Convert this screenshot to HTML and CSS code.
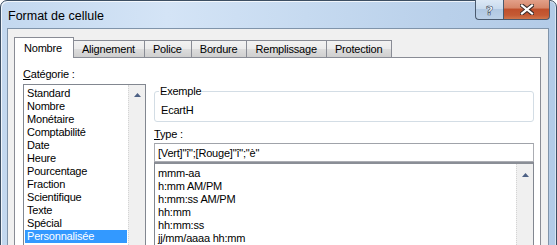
FILE: index.html
```html
<!DOCTYPE html>
<html lang="fr">
<head>
<meta charset="utf-8">
<title>Format de cellule</title>
<link rel="stylesheet" href="styles.css">
</head>
<body>
<div class="window">
  <div class="titlebar">
    <span class="title">Format de cellule</span>
    <div class="caption">
      <div class="cap-btn help">?</div>
      <div class="cap-btn close">
        <svg width="14" height="11" viewBox="0 0 14 11"><path d="M2 1.5 L12 9.5 M12 1.5 L2 9.5" stroke="#3a2a28" stroke-width="4.2" stroke-linecap="square"/><path d="M2 1.5 L12 9.5 M12 1.5 L2 9.5" stroke="#fff" stroke-width="2.2" stroke-linecap="square"/></svg>
      </div>
    </div>
  </div>
  <div class="client">
    <div class="tabs">
      <div class="tab active">Nombre</div>
      <div class="tab">Alignement</div>
      <div class="tab">Police</div>
      <div class="tab">Bordure</div>
      <div class="tab">Remplissage</div>
      <div class="tab">Protection</div>
    </div>
    <div class="panel">
      <div class="col-left">
        <div class="label"><u>C</u>atégorie :</div>
        <div class="listbox cat-list">
          <ul class="items">
            <li>Standard</li>
            <li>Nombre</li>
            <li>Monétaire</li>
            <li>Comptabilité</li>
            <li>Date</li>
            <li>Heure</li>
            <li>Pourcentage</li>
            <li>Fraction</li>
            <li>Scientifique</li>
            <li>Texte</li>
            <li>Spécial</li>
            <li class="selected">Personnalisée</li>
          </ul>
          <div class="scrollbar"><svg class="arrow" width="7" height="4" viewBox="0 0 7 4"><path d="M0 4 L3.5 0 L7 4 Z" fill="#4d6185"/></svg></div>
        </div>
      </div>
      <div class="col-right">
        <fieldset class="group">
          <legend>Exemple</legend>
          <div class="sample">EcartH</div>
        </fieldset>
        <div class="label type-label"><u>T</u>ype :</div>
        <div class="input">[Vert]"î";[Rouge]"î";"è"</div>
        <div class="listbox type-list">
          <ul class="items">
            <li>mmm-aa</li>
            <li>h:mm AM/PM</li>
            <li>h:mm:ss AM/PM</li>
            <li>hh:mm</li>
            <li>hh:mm:ss</li>
            <li>jj/mm/aaaa hh:mm</li>
          </ul>
          <div class="scrollbar"><svg class="arrow" width="7" height="4" viewBox="0 0 7 4"><path d="M0 4 L3.5 0 L7 4 Z" fill="#4d6185"/></svg></div>
        </div>
      </div>
    </div>
  </div>
</div>
</body>
</html>
```

FILE: styles.css
```css
* { box-sizing: border-box; }
html, body { margin: 0; padding: 0; }
body {
  width: 557px;
  height: 245px;
  overflow: hidden;
  background: #ffffff;
  font-family: "Liberation Sans", Arial, sans-serif;
  font-size: 11px;
  letter-spacing: -0.2px;
  color: #000;
}
.window {
  width: 557px;
  height: 300px;
  border: 1px solid #3d4f63;
  border-radius: 7px 7px 0 0;
  background: linear-gradient(to right, #c3d8ef 0%, #d4e4f6 30%, #c6daf0 55%, #b9d0ea 80%, #b3cbe7 100%);
  box-shadow: inset 1px 1px 0 rgba(255,255,255,0.75), inset -1px 0 0 rgba(255,255,255,0.5);
  display: flex;
  flex-direction: column;
}
.titlebar {
  height: 27px;
  display: flex;
  justify-content: space-between;
  align-items: flex-start;
  padding: 0 6px 0 7px;
}
.title {
  font-size: 12.5px;
  letter-spacing: 0;
  line-height: 14px;
  padding-top: 8px;
  color: #000;
}
.caption {
  display: flex;
  margin-top: -1px;
  height: 20px;
}
.cap-btn {
  height: 20px;
  display: flex;
  align-items: center;
  justify-content: center;
  border: 1px solid #4a5a6e;
  border-top: none;
}
.help {
  width: 28px;
  border-right: none;
  border-radius: 0 0 0 4px;
  background: linear-gradient(to bottom, #dce8f5 0%, #c9dbee 45%, #b1c8e2 50%, #bcd1e8 100%);
  color: #fff;
  font-family: "DejaVu Sans", sans-serif;
  font-weight: bold;
  font-size: 13px;
  letter-spacing: 0;
  -webkit-text-stroke: 0.6px #3d4a5c;
  padding-top: 1px;
}
.close {
  width: 47px;
  border-radius: 0 0 4px 0;
  background: linear-gradient(to bottom, #e2a089 0%, #d7886b 40%, #c0502c 50%, #c45a34 80%, #d0764c 100%);
}
.client {
  flex: 1;
  margin: 0 7px 0 6px;
  border: 1px solid #8094aa;
  background: #f0f0f0;
  padding: 8px 7px 0 6px;
  display: flex;
  flex-direction: column;
}
.tabs {
  display: flex;
  align-items: flex-end;
  height: 20px;
  position: relative;
  z-index: 1;
}
.tab {
  height: 17px;
  line-height: 16px;
  padding: 0 9px 0 8px;
  border: 1px solid #898c95;
  border-bottom: none;
  border-left: none;
  background: linear-gradient(to bottom, #f2f2f2 0%, #ebebeb 50%, #dddddd 51%, #cfcfcf 100%);
}
.tab.active {
  height: 21px;
  line-height: 20px;
  padding: 0 11px 0 9px;
  border-left: 1px solid #898c95;
  background: #ffffff;
  margin-bottom: -1px;
}
.panel {
  flex: 1;
  width: 527px;
  border: 1px solid #898c95;
  background: #ffffff;
  padding: 10px 6px 0 8px;
  display: flex;
  gap: 8px;
}
.col-left {
  width: 123px;
  display: flex;
  flex-direction: column;
}
.col-right {
  flex: 1;
  display: flex;
  flex-direction: column;
}
.label {
  line-height: 13px;
  height: 13px;
}
.listbox {
  border: 1px solid #828790;
  display: flex;
  background: #fff;
}
.cat-list {
  margin-top: 3px;
  height: 170px;
}
.items {
  list-style: none;
  margin: 0;
  padding: 2px 1px 0 1px;
  flex: 1;
}
.items li {
  height: 13px;
  line-height: 13px;
  padding-left: 2px;
  white-space: nowrap;
}
.items li.selected {
  background: #3399ff;
  color: #fff;
}
.scrollbar {
  width: 17px;
  background: #f0f0f0;
  border-left: 1px dotted #d4d4d4;
  display: flex;
  justify-content: center;
  align-items: flex-start;
  padding-top: 8px;
}
.group {
  margin: 17px 0 0 0;
  padding: 0 6px 4px 4px;
  border: 1px solid #d3dde5;
  border-radius: 3px;
  min-width: 0;
}
.group legend {
  padding: 0 1px;
  line-height: 13px;
}
.sample {
  margin-top: 6px;
  margin-left: 2px;
  line-height: 13px;
}
.type-label {
  margin-top: 6px;
}
.input {
  margin-top: 2px;
  height: 19px;
  border: 1px solid #abadb3;
  border-top-color: #a0a3aa;
  padding: 3px 0 0 3px;
  line-height: 13px;
  white-space: nowrap;
}
.type-list {
  margin-top: 0;
  height: 100px;
  border-top: 2px solid #8a8e96;
}
.type-list .items {
  padding-top: 3px;
}
.type-list .scrollbar {
  padding-top: 9px;
}
```
